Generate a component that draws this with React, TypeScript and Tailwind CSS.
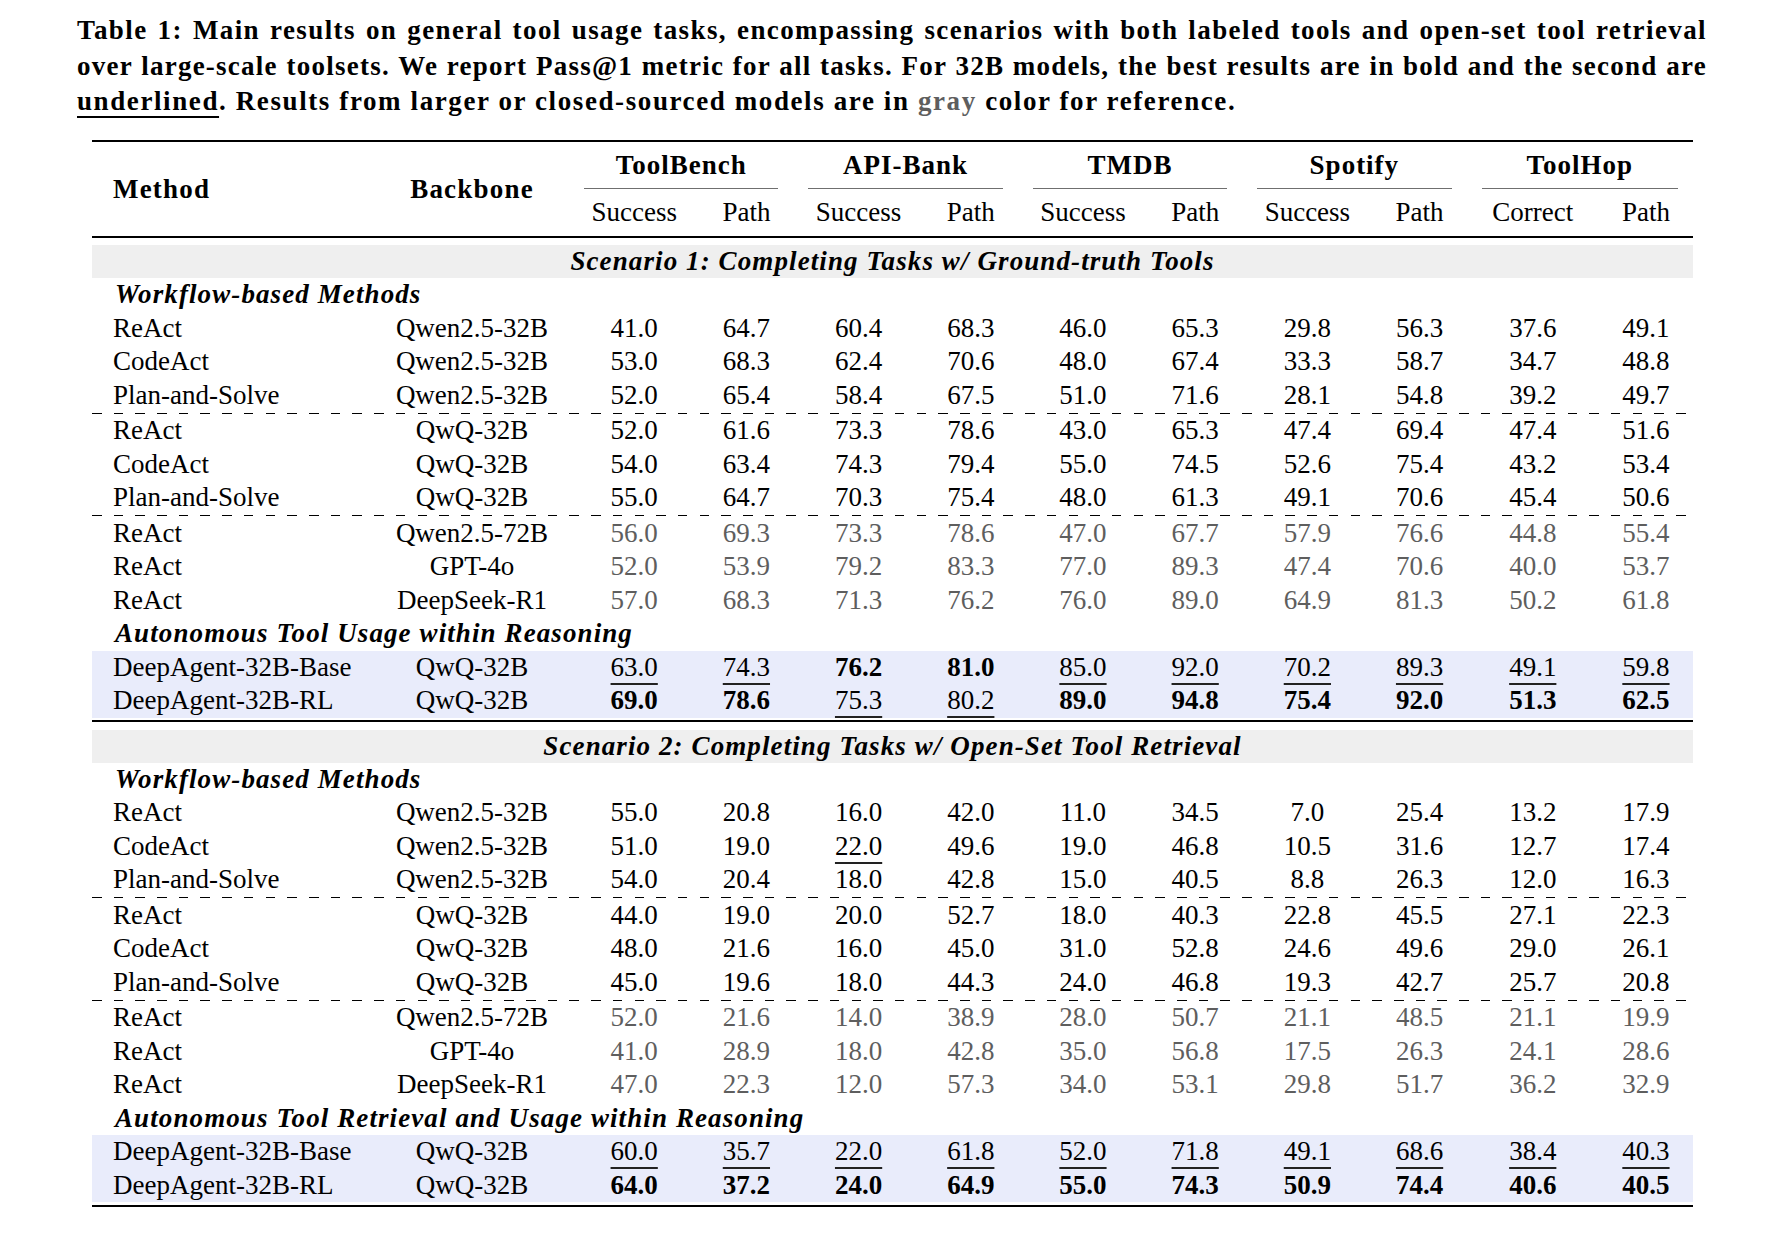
import clsx from "clsx"

const COLS =
  "grid grid-cols-[283px_194px_130.4px_94px_130.4px_94px_130.4px_94px_130.4px_94px_132.4px_94px]"

type Row = { m: string; b: string; v: string[]; gray?: boolean }
type Block = { kind: "label"; text: string } | { kind: "rows"; rows: Row[] } | { kind: "dash" } | { kind: "ours"; rows: Row[] }

const split = (s: string) => s.split(" ")

const scenario1: Block[] = [
  { kind: "label", text: "Workflow-based Methods" },
  {
    kind: "rows",
    rows: [
      { m: "ReAct", b: "Qwen2.5-32B", v: split("41.0 64.7 60.4 68.3 46.0 65.3 29.8 56.3 37.6 49.1") },
      { m: "CodeAct", b: "Qwen2.5-32B", v: split("53.0 68.3 62.4 70.6 48.0 67.4 33.3 58.7 34.7 48.8") },
      { m: "Plan-and-Solve", b: "Qwen2.5-32B", v: split("52.0 65.4 58.4 67.5 51.0 71.6 28.1 54.8 39.2 49.7") },
    ],
  },
  { kind: "dash" },
  {
    kind: "rows",
    rows: [
      { m: "ReAct", b: "QwQ-32B", v: split("52.0 61.6 73.3 78.6 43.0 65.3 47.4 69.4 47.4 51.6") },
      { m: "CodeAct", b: "QwQ-32B", v: split("54.0 63.4 74.3 79.4 55.0 74.5 52.6 75.4 43.2 53.4") },
      { m: "Plan-and-Solve", b: "QwQ-32B", v: split("55.0 64.7 70.3 75.4 48.0 61.3 49.1 70.6 45.4 50.6") },
    ],
  },
  { kind: "dash" },
  {
    kind: "rows",
    rows: [
      { m: "ReAct", b: "Qwen2.5-72B", gray: true, v: split("56.0 69.3 73.3 78.6 47.0 67.7 57.9 76.6 44.8 55.4") },
      { m: "ReAct", b: "GPT-4o", gray: true, v: split("52.0 53.9 79.2 83.3 77.0 89.3 47.4 70.6 40.0 53.7") },
      { m: "ReAct", b: "DeepSeek-R1", gray: true, v: split("57.0 68.3 71.3 76.2 76.0 89.0 64.9 81.3 50.2 61.8") },
    ],
  },
  { kind: "label", text: "Autonomous Tool Usage within Reasoning" },
  {
    kind: "ours",
    rows: [
      { m: "DeepAgent-32B-Base", b: "QwQ-32B", v: split("u:63.0 u:74.3 b:76.2 b:81.0 u:85.0 u:92.0 u:70.2 u:89.3 u:49.1 u:59.8") },
      { m: "DeepAgent-32B-RL", b: "QwQ-32B", v: split("b:69.0 b:78.6 u:75.3 u:80.2 b:89.0 b:94.8 b:75.4 b:92.0 b:51.3 b:62.5") },
    ],
  },
]

const scenario2: Block[] = [
  { kind: "label", text: "Workflow-based Methods" },
  {
    kind: "rows",
    rows: [
      { m: "ReAct", b: "Qwen2.5-32B", v: split("55.0 20.8 16.0 42.0 11.0 34.5 7.0 25.4 13.2 17.9") },
      { m: "CodeAct", b: "Qwen2.5-32B", v: split("51.0 19.0 u:22.0 49.6 19.0 46.8 10.5 31.6 12.7 17.4") },
      { m: "Plan-and-Solve", b: "Qwen2.5-32B", v: split("54.0 20.4 18.0 42.8 15.0 40.5 8.8 26.3 12.0 16.3") },
    ],
  },
  { kind: "dash" },
  {
    kind: "rows",
    rows: [
      { m: "ReAct", b: "QwQ-32B", v: split("44.0 19.0 20.0 52.7 18.0 40.3 22.8 45.5 27.1 22.3") },
      { m: "CodeAct", b: "QwQ-32B", v: split("48.0 21.6 16.0 45.0 31.0 52.8 24.6 49.6 29.0 26.1") },
      { m: "Plan-and-Solve", b: "QwQ-32B", v: split("45.0 19.6 18.0 44.3 24.0 46.8 19.3 42.7 25.7 20.8") },
    ],
  },
  { kind: "dash" },
  {
    kind: "rows",
    rows: [
      { m: "ReAct", b: "Qwen2.5-72B", gray: true, v: split("52.0 21.6 14.0 38.9 28.0 50.7 21.1 48.5 21.1 19.9") },
      { m: "ReAct", b: "GPT-4o", gray: true, v: split("41.0 28.9 18.0 42.8 35.0 56.8 17.5 26.3 24.1 28.6") },
      { m: "ReAct", b: "DeepSeek-R1", gray: true, v: split("47.0 22.3 12.0 57.3 34.0 53.1 29.8 51.7 36.2 32.9") },
    ],
  },
  { kind: "label", text: "Autonomous Tool Retrieval and Usage within Reasoning" },
  {
    kind: "ours",
    rows: [
      { m: "DeepAgent-32B-Base", b: "QwQ-32B", v: split("u:60.0 u:35.7 u:22.0 u:61.8 u:52.0 u:71.8 u:49.1 u:68.6 u:38.4 u:40.3") },
      { m: "DeepAgent-32B-RL", b: "QwQ-32B", v: split("b:64.0 b:37.2 b:24.0 b:64.9 b:55.0 b:74.3 b:50.9 b:74.4 b:40.6 b:40.5") },
    ],
  },
]

function Cell({ v, gray }: { v: string; gray?: boolean }) {
  const bold = v.startsWith("b:")
  const under = v.startsWith("u:")
  const text = bold || under ? v.slice(2) : v
  return (
    <div className="text-center">
      <span
        className={clsx(
          bold && "font-bold",
          under && "underline underline-offset-[7px] [text-decoration-thickness:1.5px] decoration-[#222]",
          gray && "text-[#5e5e5e]"
        )}
      >
        {text}
      </span>
    </div>
  )
}

function DataRow({ row }: { row: Row }) {
  return (
    <div className={`${COLS} h-[33.5px] leading-[33.5px]`}>
      <div className="pl-[21px] whitespace-nowrap">{row.m}</div>
      <div className="text-center whitespace-nowrap">{row.b}</div>
      {row.v.map((v, i) => (
        <Cell key={i} v={v} gray={row.gray} />
      ))}
    </div>
  )
}

function Dash() {
  return (
    <div className="h-[2px] flex items-center">
      <div className="h-px w-full bg-[repeating-linear-gradient(90deg,#000_0px,#000_9.5px,transparent_9.5px,transparent_21.7px)]" />
    </div>
  )
}

function Section({ title, blocks }: { title: string; blocks: Block[] }) {
  return (
    <div>
      <div className="h-[33px] bg-[#efefef] flex items-center justify-center font-bold italic tracking-[1.1px]">
        {title}
      </div>
      {blocks.map((b, i) => {
        if (b.kind === "label")
          return (
            <div key={i} className="h-[33.5px] leading-[33.5px] pl-[23px] font-bold italic tracking-[1.1px]">
              {b.text}
            </div>
          )
        if (b.kind === "dash") return <Dash key={i} />
        if (b.kind === "ours")
          return (
            <div key={i} className="bg-[#e9ecfb]">
              {b.rows.map((r, j) => (
                <DataRow key={j} row={r} />
              ))}
            </div>
          )
        return (
          <div key={i}>
            {b.rows.map((r, j) => (
              <DataRow key={j} row={r} />
            ))}
          </div>
        )
      })}
    </div>
  )
}

const groups = ["ToolBench", "API-Bank", "TMDB", "Spotify", "ToolHop"]
const subs = ["Success", "Path", "Success", "Path", "Success", "Path", "Success", "Path", "Correct", "Path"]

export default function App() {
  return (
    <div className="w-[1792px] h-[1238px] bg-white text-black font-['Liberation_Serif',serif]">
      {/* caption, one div per line so the breaks match */}
      <div className="pt-[13px] pl-[77px] w-[1707px] text-[27px] leading-[35.5px] font-bold">
        <div className="text-justify [text-align-last:justify] whitespace-nowrap tracking-[1.4px]">
          Table 1: Main results on general tool usage tasks, encompassing scenarios with both labeled tools and open-set tool retrieval
        </div>
        <div className="text-justify [text-align-last:justify] whitespace-nowrap tracking-[1.25px]">
          over large-scale toolsets. We report Pass@1 metric for all tasks. For 32B models, the best results are in bold and the second are
        </div>
        <div className="whitespace-nowrap tracking-[1.6px]">
          <span className="underline underline-offset-[6px] [text-decoration-thickness:2px]">underlined</span>. Results from
          larger or closed-sourced models are in <span className="text-[#5e5e5e]">gray</span> color for reference.
        </div>
      </div>

      {/* table */}
      <div className="ml-[92px] mt-[20.5px] w-[1601px] text-[27px]">
        <div className="h-[2px] bg-black" />
        <div className={`${COLS} grid-rows-[46px_1px_47px]`}>
          <div className="row-span-3 flex items-center pl-[21px] font-bold tracking-[1.2px]">Method</div>
          <div className="row-span-3 flex items-center justify-center font-bold tracking-[1.2px]">Backbone</div>
          {groups.map((g) => (
            <div key={g} className="col-span-2 flex items-center justify-center font-bold tracking-[1px]">
              {g}
            </div>
          ))}
          {groups.map((g) => (
            <div key={g + "-rule"} className="col-span-2 mx-[15px] bg-[#6f6f6f]" />
          ))}
          {subs.map((s, i) => (
            <div key={i} className="flex items-center justify-center">
              {s}
            </div>
          ))}
        </div>
        <div className="h-[1.5px] bg-black" />
        <div className="h-[7.5px]" />
        <Section title="Scenario 1: Completing Tasks w/ Ground-truth Tools" blocks={scenario1} />
        <div className="mt-[2px] h-[2px] bg-black" />
        <div className="h-[8px]" />
        <Section title="Scenario 2: Completing Tasks w/ Open-Set Tool Retrieval" blocks={scenario2} />
        <div className="mt-[3px] h-[2px] bg-black" />
      </div>
    </div>
  )
}
